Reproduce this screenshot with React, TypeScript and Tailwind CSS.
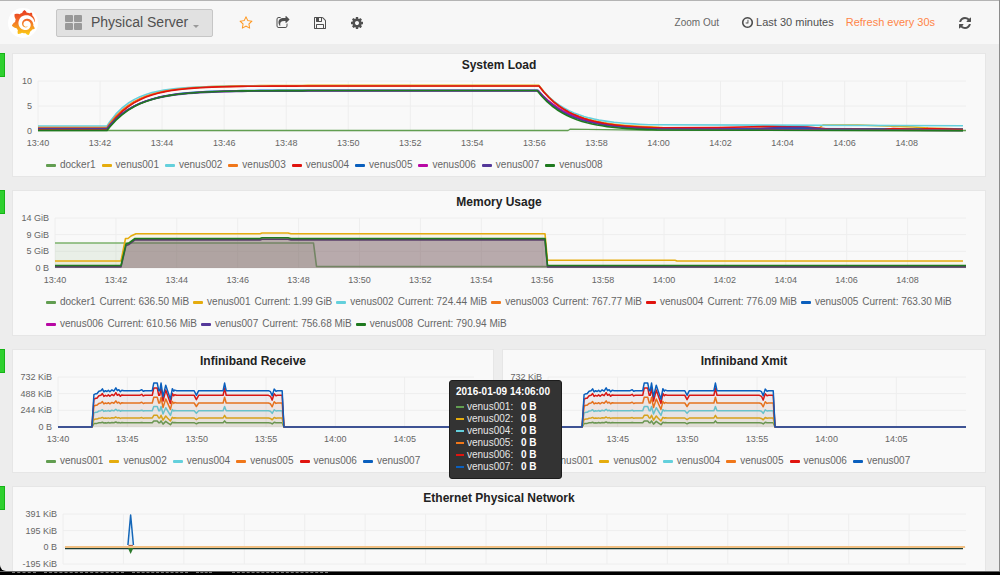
import React, { useId } from "react";
import { SiGrafana } from "react-icons/si";

type Point = [number, number];

const C = {
  green: "#629e51",
  yellow: "#e5ac0e",
  cyan: "#64d0dc",
  orange: "#f0771a",
  red: "#e0140f",
  blue: "#0a5fbd",
  magenta: "#b808a4",
  purple: "#54389a",
  darkGreen: "#1f7a1f",
};

const GLYPHS = {
  star: "M1201 1004l306-297-422-62-189-382-189 382-422 62 306 297-73 421 378-199 377 199zm527-357q0 22-26 48l-363 354 86 500q1 7 1 20 0 50-41 50-19 0-40-12l-449-236-449 236q-22 12-40 12-21 0-31.5-14.5t-10.5-35.5q0-6 2-20l86-500-364-354q-25-27-25-48 0-37 56-46l502-73 225-455q19-41 49-41t49 41l225 455 502 73q56 9 56 46z",
  share:
    "M1472 989v259q0 119-84.5 203.5t-203.5 84.5h-832q-119 0-203.5-84.5t-84.5-203.5v-832q0-119 84.5-203.5t203.5-84.5h255q13 0 22.5 9.5t9.5 22.5q0 27-26 32-77 26-133 60-10 4-16 4h-112q-66 0-113 47t-47 113v832q0 66 47 113t113 47h832q66 0 113-47t47-113v-214q0-19 18-29 28-13 54-37 16-16 35-8 21 9 21 29zm237-496l-384 384q-18 19-45 19-12 0-25-5-39-17-39-59v-192h-160q-323 0-438 131-119 137-74 473 3 23-20 34-8 2-12 2-16 0-26-13-10-14-21-31t-39.5-68.5-49.5-99.5-38.5-114-17.5-122q0-49 3.5-91t14-90 28-88 47-81.5 68.5-74 94.5-61.5 124.5-48.5 159.5-30.5 196.5-11h160v-192q0-42 39-59 13-5 25-5 26 0 45 19l384 384q19 19 19 45t-19 45z",
  save: "M512 1536h768v-384h-768v384zm896 0h128v-896q0-14-10-38.5t-20-34.5l-281-281q-10-10-34-20t-39-10v416q0 40-28 68t-68 28h-576q-40 0-68-28t-28-68v-416h-128v1280h128v-416q0-40 28-68t68-28h832q40 0 68 28t28 68v416zm-384-928v-320q0-13-9.5-22.5t-22.5-9.5h-192q-13 0-22.5 9.5t-9.5 22.5v320q0 13 9.5 22.5t22.5 9.5h192q13 0 22.5-9.5t9.5-22.5zm640 32v928q0 40-28 68t-68 28h-1344q-40 0-68-28t-28-68v-1344q0-40 28-68t68-28h928q40 0 88 20t76 48l280 280q28 28 48 76t20 88z",
  cog: "M1152 896q0-106-75-181t-181-75-181 75-75 181 75 181 181 75 181-75 75-181zm512-109v222q0 12-8 23t-20 13l-185 28q-19 54-39 91 35 50 107 138 10 12 10 25t-9 23q-27 37-99 108t-94 71q-12 0-26-9l-138-108q-44 23-91 38-16 136-29 186-7 28-36 28h-222q-14 0-24.5-8.5t-11.5-21.5l-28-184q-49-16-90-37l-141 107q-10 9-25 9-14 0-25-11-126-114-165-168-7-10-7-23 0-12 8-23 15-21 51-66.5t54-70.5q-27-50-41-99l-183-27q-13-2-21-12.5t-8-23.5v-222q0-12 8-23t19-13l186-28q14-46 39-92-40-57-107-138-10-12-10-24 0-10 9-23 26-36 98.5-107.5t94.5-71.5q13 0 26 10l138 107q44-23 91-38 16-136 29-186 7-28 36-28h222q14 0 24.5 8.5t11.5 21.5l28 184q49 16 90 37l142-107q9-9 24-9 13 0 25 10 129 119 165 170 7 8 7 22 0 12-8 23-15 21-51 66.5t-54 70.5q26 50 41 98l183 28q13 2 21 12.5t8 23.5z",
  clock:
    "M1024 544v448q0 14-9 23t-23 9h-320q-14 0-23-9t-9-23v-64q0-14 9-23t23-9h224v-352q0-14 9-23t23-9h64q14 0 23 9t9 23zm416 352q0-148-73-273t-198-198-273-73-273 73-198 198-73 273 73 273 198 198 273 73 273-73 198-198 73-273zm224 0q0 209-103 385.5t-279.5 279.5-385.5 103-385.5-103-279.5-279.5-103-385.5 103-385.5 279.5-279.5 385.5-103 385.5 103 279.5 279.5 103 385.5z",
  refresh:
    "M1511 928q0 5-1 7-64 268-268 434.5t-478 166.5q-146 0-282.5-55t-243.5-157l-129 129q-19 19-45 19t-45-19-19-45v-448q0-26 19-45t45-19h448q26 0 45 19t19 45-19 45l-137 137q71 66 161 102t187 36q134 0 250-65t186-179q11-17 53-117 8-23 30-23h192q13 0 22.5 9.5t9.5 22.5zm25-800v448q0 26-19 45t-45 19h-448q-26 0-45-19t-19-45 19-45l138-138q-148-137-349-137-134 0-250 65t-186 179q-11 17-53 117-8 23-30 23h-199q-13 0-22.5-9.5t-9.5-22.5v-7q65-268 270-434.5t480-166.5q146 0 284 55.5t245 156.5l130-129q19-19 45-19t45 19 19 45z",
};

function Glyph({ name, box = "0 0 1792 1792", className }: { name: keyof typeof GLYPHS; box?: string; className: string }) {
  return (
    <svg viewBox={box} fill="currentColor" aria-hidden="true" className={className}>
      <path d={GLYPHS[name]} />
    </svg>
  );
}

const toPoints = (pts: Point[]) => pts.map(([x, y]) => `${x.toFixed(1)},${y.toFixed(1)}`).join(" ");

function Line({ pts, color, width = 1.6, opacity = 1 }: { pts: Point[]; color: string; width?: number; opacity?: number }) {
  return (
    <polyline
      points={toPoints(pts)}
      fill="none"
      stroke={color}
      strokeWidth={width}
      strokeOpacity={opacity}
      strokeLinejoin="round"
      vectorEffect="non-scaling-stroke"
    />
  );
}

function Area({ pts, color, opacity }: { pts: Point[]; color: string; opacity: number }) {
  const first = pts[0][0];
  const last = pts[pts.length - 1][0];
  return <polygon points={`${first},50 ${toPoints(pts)} ${last},50`} fill={color} fillOpacity={opacity} />;
}

/* ---- Series data, in plot units: x along the time axis, y from 0 (top) to 50 (baseline) ---- */

function loadCurve(base: number, top: number, rise: number, end: number, fall: number, floor: number, wiggle: Point[] = []): Point[] {
  const pts: Point[] = [[0, base], [69, base]];
  for (let x = 72; x <= 498; x += 6) pts.push([x, top + (base - top) * Math.exp(-(x - 69) / rise)]);
  pts.push([end, top]);
  for (let x = end + 5; x <= 620; x += 5) pts.push([x, floor - (floor - top) * Math.exp(-(x - end) / fall)]);
  return [...pts, ...(wiggle.length ? wiggle : ([[925, floor]] as Point[]))];
}

const LOAD: { color: string; pts: Point[]; width?: number }[] = [
  {
    color: C.yellow,
    pts: loadCurve(47, 4.4, 29, 501, 31, 47, [[640, 48], [780, 48], [785, 44], [820, 44], [875, 46], [890, 47], [925, 48]]),
  },
  { color: C.cyan, pts: loadCurve(45, 5, 25, 501, 31, 44.8) },
  { color: C.orange, pts: loadCurve(46.5, 5, 28, 501, 31, 47.5, [[700, 48.5], [760, 46], [800, 48.5], [925, 48.5]]) },
  { color: C.blue, pts: loadCurve(48.5, 9.2, 30, 500, 31, 48) },
  { color: C.magenta, pts: loadCurve(48, 9.6, 30, 500, 36, 49.5) },
  {
    color: C.red,
    pts: loadCurve(48.5, 5, 28.6, 501, 32, 48, [[680, 46.5], [730, 45.5], [770, 46], [790, 48], [845, 48.5], [855, 47.5], [880, 48.5], [890, 47.5], [925, 48.5]]),
  },
  {
    color: C.purple,
    pts: loadCurve(47.5, 10, 30, 500, 32, 49, [[700, 49.2], [740, 46.5], [765, 46.2], [790, 48.5], [830, 49], [925, 49.5]]),
  },
  { color: C.green, pts: [[0, 49.5], [530, 49.5], [532, 48.2], [600, 49.2], [928, 49.5]], width: 1.3 },
  { color: C.darkGreen, pts: loadCurve(49.5, 9.5, 30, 499, 31, 49.8) },
];

const MEM_DOCKER: Point[] = [[0, 25], [258.5, 25], [261.5, 48.5], [911, 48.5]];
const MEM_FIRST: Point[] = [[0, 43], [66, 43], [70.5, 20.5], [73, 20.5], [76, 18], [81, 15.7], [205, 15.7], [207, 15], [233, 15], [236, 15.7], [490, 15.7], [492.5, 42.3], [620, 42.3], [622, 43], [908, 43]];
const MEM_MAIN: Point[] = [[0, 47.5], [66, 47.5], [71, 26], [74, 25], [80, 20.5], [205, 20.5], [207, 19.8], [233, 19.8], [236, 20.5], [490, 20.5], [492.5, 47.5], [911, 47.5]];
const MEM_SHADE: Point[] = MEM_MAIN.map(([x, y]): Point => [x, y + 1.4]);

/* Deviation of the outermost network series from its level. */
const NET_SHAPE: Point[] = [
  [36, 4], [38, 3], [39, 3], [41, 0.5], [43, 0], [44.5, -1.8], [46, 1.2], [47.5, 0], [49, 0.8], [50.5, -0.4], [52, 1], [54, -0.8], [56, 0.4], [58, -2.8], [59.5, 0], [61, -1], [62.5, 1], [64, -0.4],
  [66, 0], [82, 0], [84, -1], [85.5, 0.6], [87, 0], [94.5, 0], [96, -7.6], [99.5, -7.6], [101, 0], [102, 0], [103.3, -7.6], [105.3, 6], [108, -5.5], [110, 0.5], [112.7, 8.5], [114.6, -2], [116, 0.5], [117, -0.6],
  [119, 0], [136.5, 0], [138.7, 4.6], [141, 0], [165.5, 0], [167, -7.6], [168.6, 0], [211, 0], [213, 1], [214.7, 5], [216.7, -1.6], [218.5, 0.5], [220, 0], [224.7, 0],
];

const NET: { color: string; level: number }[] = [
  { color: C.blue, level: 36.3 },
  { color: C.red, level: 31.7 },
  { color: C.orange, level: 24 },
  { color: C.cyan, level: 16.3 },
  { color: C.yellow, level: 9 },
  { color: C.green, level: 4.3 },
];

function netSeries(level: number): Point[] {
  const scale = Math.min(1, 0.12 + level / 38);
  return [[0, 50], [34, 50], ...NET_SHAPE.map(([x, d]): Point => [x, 50 - level + d * scale]), [226.5, 50], [417, 50]];
}

/* ---- Chart frame ---- */

interface FrameProps {
  width: number;
  step: number;
  rows: number;
  yLabels: string[];
  xLabels?: string[];
  gutter: string;
  label: string;
  children: React.ReactNode;
}

function Chart({ width, step, rows, yLabels, xLabels, gutter, label, children }: FrameProps) {
  const lines: number[] = [];
  for (let x = 0; x < width; x += step) lines.push(x);
  return (
    <div className="flex pr-[19px] text-[9px] leading-4 text-[#666]">
      <div className={`${gutter} flex h-[50px] shrink-0 flex-col justify-between pr-1.5`}>
        {yLabels.map((t) => (
          <span key={t} className="flex h-0 items-center justify-end whitespace-nowrap">
            {t}
          </span>
        ))}
      </div>
      <div className="min-w-0 flex-1">
        <svg viewBox={`0 0 ${width} 50`} preserveAspectRatio="none" role="img" aria-label={label} className="block h-[50px] w-full overflow-visible">
          <g stroke="#eeeeee" strokeWidth="1">
            {lines.map((x) => (
              <line key={x} x1={x} x2={x} y1="0" y2="50" vectorEffect="non-scaling-stroke" />
            ))}
            {Array.from({ length: rows + 1 }, (_, i) => (
              <line key={i} x1="0" x2={width} y1={(50 / rows) * i} y2={(50 / rows) * i} vectorEffect="non-scaling-stroke" />
            ))}
          </g>
          {children}
        </svg>
        {xLabels && (
          <div className="mt-1 flex justify-between" style={{ width: `${((xLabels.length - 1) * step * 100) / width}%` }}>
            {xLabels.map((t) => (
              <span key={t} className="flex w-0 justify-center whitespace-nowrap">
                {t}
              </span>
            ))}
          </div>
        )}
      </div>
    </div>
  );
}

function Legend({ items, gap = "gap-x-1.5" }: { items: { name: string; color: string; current?: string }[]; gap?: string }) {
  return (
    <ul className={`${gap} mt-[3px] flex flex-wrap pl-[33px] text-[10px] leading-[22px] text-[#666]`}>
      {items.map((s) => (
        <li key={s.name} className="flex items-center gap-1 whitespace-nowrap">
          <span className="h-[3px] w-2.5 rounded-[1px]" style={{ backgroundColor: s.color }} />
          <span>{s.name}</span>
          {s.current && <span>Current: {s.current}</span>}
        </li>
      ))}
    </ul>
  );
}

function Panel({ title, children }: { title: string; children: React.ReactNode }) {
  return (
    <section className="min-w-0 flex-1 border border-[#e6e6e6] bg-[#f9f9f9]">
      <h2 className="mb-[5px] text-center text-[12px] leading-[22px] font-bold text-[#222]">{title}</h2>
      {children}
    </section>
  );
}

function Row({ children }: { children: React.ReactNode }) {
  return (
    <div className="flex items-start gap-[7px]">
      <button type="button" aria-label="Row menu" className="h-6 w-[5px] shrink-0 border border-l-0 border-[#16b416] bg-[#2fd02f]" />
      <div className="flex min-w-0 flex-1 gap-2">{children}</div>
    </div>
  );
}

const times = (hm: [number, number[]][]) => hm.flatMap(([h, ms]) => ms.map((m) => `${h}:${String(m).padStart(2, "0")}`));
const EVERY_TWO = times([[13, [40, 42, 44, 46, 48, 50, 52, 54, 56, 58]], [14, [0, 2, 4, 6, 8]]]);
const EVERY_FIVE = times([[13, [40, 45, 50, 55]], [14, [0, 5]]]);

const HOSTS = [
  { name: "docker1", color: C.green, current: "636.50 MiB" },
  { name: "venus001", color: C.yellow, current: "1.99 GiB" },
  { name: "venus002", color: C.cyan, current: "724.44 MiB" },
  { name: "venus003", color: C.orange, current: "767.77 MiB" },
  { name: "venus004", color: C.red, current: "776.09 MiB" },
  { name: "venus005", color: C.blue, current: "763.30 MiB" },
  { name: "venus006", color: C.magenta, current: "610.56 MiB" },
  { name: "venus007", color: C.purple, current: "756.68 MiB" },
  { name: "venus008", color: C.darkGreen, current: "790.94 MiB" },
];

const IB_HOSTS = [
  { name: "venus001", color: C.green },
  { name: "venus002", color: C.yellow },
  { name: "venus004", color: C.cyan },
  { name: "venus005", color: C.orange },
  { name: "venus006", color: C.red },
  { name: "venus007", color: C.blue },
];

function InfinibandChart({ title }: { title: string }) {
  return (
    <Chart
      label={title}
      width={417}
      step={69.5}
      rows={3}
      gutter="w-[45px]"
      yLabels={["732 KiB", "488 KiB", "244 KiB", "0 B"]}
      xLabels={EVERY_FIVE}
    >
      {[...NET].reverse().map((s) => (
        <g key={s.color}>
          <Area pts={netSeries(s.level)} color={s.color} opacity={0.04} />
          <Line pts={netSeries(s.level)} color={s.color} width={1.5} />
        </g>
      ))}
    </Chart>
  );
}

function Tooltip() {
  return (
    <div
      role="tooltip"
      className="absolute top-[31px] left-full z-10 -ml-[45px] w-[113px] rounded-[3px] border border-[#1c1c1c] bg-[#333] px-1.5 pt-1 pb-[5px] text-[10px] leading-3 text-[#e6e6e6]"
    >
      <div className="mb-0.5 leading-[14px] font-bold whitespace-nowrap text-white">2016-01-09 14:06:00</div>
      {IB_HOSTS.map((s) => (
        <div key={s.name} className="flex items-center whitespace-nowrap">
          <span className="mr-[3px] h-0.5 w-2" style={{ backgroundColor: s.color }} />
          <span className="w-[54px]">{s.name}:</span>
          <b className="text-white">0 B</b>
        </div>
      ))}
    </div>
  );
}

function Header() {
  const gradient = useId();
  return (
    <header className="flex h-11 shrink-0 items-center border-t border-[#b4b4b4] bg-[#f7f7f7] pr-7 pl-2 text-[#505050]">
      <a href="#home" aria-label="Grafana" className="mr-[18px] flex size-[30px] items-center justify-center rounded-full bg-white">
        <svg width="0" height="0" className="absolute" aria-hidden="true">
          <linearGradient id={gradient} x1="0" y1="0" x2="0" y2="1">
            <stop offset="0" stopColor="#e8391d" />
            <stop offset="0.45" stopColor="#f2702a" />
            <stop offset="1" stopColor="#fccf14" />
          </linearGradient>
        </svg>
        <SiGrafana size={25} fill={`url(#${gradient})`} />
      </a>
      <button type="button" className="flex h-7 w-[157px] items-center rounded-xs border border-[#c6c6c6] bg-[#e1e1e1] pl-2">
        <span className="mr-[9px] grid grid-cols-2 gap-px">
          {[0, 1, 2, 3].map((i) => (
            <span key={i} className="h-[7px] w-2 rounded-[1px] bg-[#999]" />
          ))}
        </span>
        <span className="text-[14px] whitespace-nowrap">Physical Server</span>
        <span className="mt-2 ml-[5px] border-x-[3px] border-t-[3px] border-x-transparent border-t-[#999]" />
      </button>
      <nav className="ml-[26px] flex gap-[23px]">
        <button type="button" aria-label="Mark as favorite" className="text-[#ff9820]">
          <Glyph name="star" className="size-3.5" />
        </button>
        <button type="button" aria-label="Share dashboard">
          <Glyph name="share" className="size-3.5" />
        </button>
        <button type="button" aria-label="Save dashboard">
          <Glyph name="save" className="size-3.5" />
        </button>
        <button type="button" aria-label="Settings">
          <Glyph name="cog" className="size-3.5" />
        </button>
      </nav>
      <div className="ml-auto flex items-center whitespace-nowrap">
        <button type="button" className="mr-[22px] text-[10px] text-[#666]">
          Zoom Out
        </button>
        <button type="button" className="mr-3 flex items-center gap-0.5 text-[11px]">
          <Glyph name="clock" className="size-[13px]" />
          Last 30 minutes
        </button>
        <button type="button" className="mr-6 text-[11px] text-[#ff8548]">
          Refresh every 30s
        </button>
        <button type="button" aria-label="Refresh">
          <Glyph name="refresh" box="0 0 1536 1536" className="size-3" />
        </button>
      </div>
    </header>
  );
}

export default function App() {
  return (
    <div className="flex h-screen flex-col overflow-hidden bg-black font-['Liberation_Sans',Arial,sans-serif]">
      <div className="flex min-h-0 flex-1 flex-col overflow-hidden rounded-bl-md border-r border-[#8c8c8c] bg-[#ededed]">
        <Header />
        <main className="flex flex-col gap-[13px] pt-[9px] pr-[13px]">
          <Row>
            <Panel title="System Load">
              <Chart label="System Load" width={928} step={62.05} rows={2} gutter="w-[25px]" yLabels={["10", "5", "0"]} xLabels={EVERY_TWO}>
                {LOAD.map((s) => (
                  <Line key={s.color} pts={s.pts} color={s.color} width={s.width} />
                ))}
              </Chart>
              <Legend items={HOSTS.map(({ name, color }) => ({ name, color }))} />
            </Panel>
          </Row>
          <Row>
            <Panel title="Memory Usage">
              <Chart label="Memory Usage" width={911} step={60.9} rows={3} gutter="w-[42px]" yLabels={["14 GiB", "9 GiB", "5 GiB", "0 B"]} xLabels={EVERY_TWO}>
                <Area pts={MEM_DOCKER} color={C.green} opacity={0.1} />
                <Area pts={MEM_FIRST} color={C.yellow} opacity={0.06} />
                <Line pts={MEM_DOCKER} color="#7cb26c" />
                <Area pts={MEM_MAIN} color="#684c5c" opacity={0.44} />
                <Line pts={MEM_FIRST} color={C.yellow} />
                <Line pts={MEM_SHADE} color="#5b3f6b" />
                <Line pts={MEM_MAIN} color={C.darkGreen} />
              </Chart>
              <Legend items={HOSTS} gap="gap-x-1" />
            </Panel>
          </Row>
          <Row>
            <div className="relative flex min-w-0 flex-1">
              <Panel title="Infiniband Receive">
                <InfinibandChart title="Infiniband Receive" />
                <Legend items={IB_HOSTS} />
              </Panel>
              <Tooltip />
            </div>
            <Panel title="Infiniband Xmit">
              <InfinibandChart title="Infiniband Xmit" />
              <Legend items={IB_HOSTS} />
            </Panel>
          </Row>
          <Row>
            <Panel title="Ethernet Physical Network">
              <div className="pb-8">
                <Chart label="Ethernet Physical Network" width={904} step={60.5} rows={3} gutter="w-[50px]" yLabels={["391 KiB", "195 KiB", "0 B", "-195 KiB"]}>
                  <polygon points="65,32 67.7,1 70.5,32" fill="#e4eef8" />
                  <Line pts={[[2, 34.6], [901, 34.6]]} color="#1d3f35" width={1.5} />
                  <polygon points="65,34 67.7,40 70.5,34" fill="#2c7a2c" />
                  <Line pts={[[2, 33], [903, 33]]} color="#f2c083" width={2} />
                  <Line pts={[[65, 31], [67.7, 1], [70.5, 31]]} color="#1567b8" width={1.5} />
                  <Line pts={[[65.5, 31.4], [70, 31.4]]} color="#b0503a" width={1} />
                </Chart>
              </div>
            </Panel>
          </Row>
        </main>
      </div>
      <div className="flex h-1 shrink-0 gap-2 border-t border-[#666] bg-black pl-3">
        <span className="h-px w-6 border-t border-dashed border-[#777]" />
        <span className="h-px w-20 border-t border-dashed border-[#777]" />
        <span className="h-px w-14 border-t border-dashed border-[#777]" />
        <span className="h-px w-4 border-t border-dashed border-[#777]" />
        <span className="ml-3 h-px w-24 border-t border-dashed border-[#777]" />
      </div>
    </div>
  );
}
